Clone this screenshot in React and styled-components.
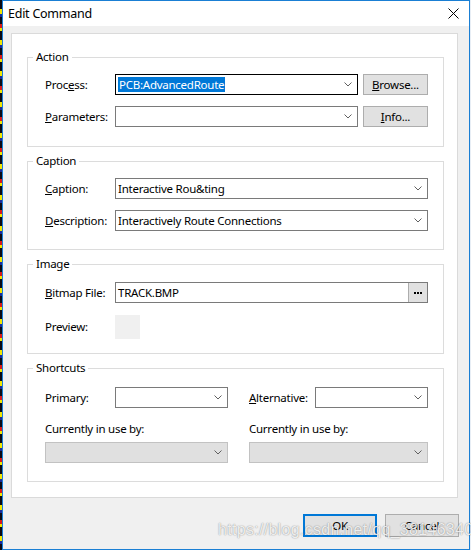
import React from 'react';
import styled, { createGlobalStyle } from 'styled-components';

const GlobalStyle = createGlobalStyle`
  html, body {
    margin: 0;
    padding: 0;
  }
  body {
    width: 471px;
    height: 550px;
    overflow: hidden;
    font-family: "Segoe UI", "Noto Sans", sans-serif;
    font-size: 11.5px;
    letter-spacing: -0.25px;
    color: #000;
  }
  * { box-sizing: border-box; }
`;

const Desktop = styled.div`
  position: relative;
  display: flex;
  width: 471px;
  height: 550px;
  background: #e8eef5;
`;

const Strip = styled.div`
  width: 2px;
  flex: none;
  background: repeating-linear-gradient(
    180deg,
    #0a0a14 0 9px,
    #f2e600 9px 14px,
    #1c2a9a 14px 17px,
    #0a0a14 17px 24px,
    #d81818 24px 28px,
    #f2e600 28px 31px
  );
`;

const Window = styled.div`
  width: 468px;
  height: 550px;
  border: 1px solid #1a7fd4;
  background: #f0f0f0;
  display: flex;
  flex-direction: column;
`;

const TitleBar = styled.div`
  height: 25px;
  flex: none;
  background: #fff;
  display: flex;
  align-items: center;
  justify-content: space-between;
  padding: 0 10px 0 5px;
  font-size: 12.5px;
`;

const Body = styled.div`
  padding: 7px 11px 0 8px;
`;

const Panel = styled.div`
  height: 465px;
  background: #fff;
  border: 1px solid #dadada;
  padding: 23px 13px 0 15px;
  display: flex;
  flex-direction: column;
  gap: 14px;
`;

const Group = styled.div`
  position: relative;
  border: 1px solid #dcdcdc;
  padding: ${p => p.$pad};
  display: flex;
  flex-direction: column;
`;

const Legend = styled.span`
  position: absolute;
  top: -9px;
  left: 5px;
  line-height: 16px;
  padding: 0 3px;
  background: #fff;
`;

const Row = styled.div`
  display: flex;
  align-items: center;
  flex: none;
  height: ${p => p.$h || 21}px;
  margin-top: ${p => p.$gap || 0}px;
`;

const Label = styled.div`
  width: ${p => p.$w || 70}px;
  flex: none;
  white-space: nowrap;
  line-height: 16px;
`;

const Combo = styled.div`
  flex: ${p => (p.$grow ? '1' : 'none')};
  width: ${p => (p.$w ? `${p.$w}px` : 'auto')};
  height: 21px;
  border: 1px solid ${p => (p.$focus ? '#000' : p.$disabled ? '#c2c2c2' : '#7a7a7a')};
  background: ${p => (p.$disabled ? '#e0e0e0' : '#fff')};
  display: flex;
  align-items: center;
  padding: 0 5px 0 1px;
  white-space: nowrap;
`;

const ComboText = styled.span`
  flex: 1;
  line-height: 17px;
  padding-left: 1px;
`;

const Selected = styled.span`
  background: #0078d7;
  color: #fff;
  line-height: 17px;
  padding: 0 1px;
`;

const Button = styled.button`
  flex: none;
  width: ${p => p.$w}px;
  height: ${p => p.$h || 21}px;
  margin-left: ${p => p.$ml || 0}px;
  margin-top: ${p => p.$mt || 0}px;
  border: ${p => (p.$default ? '2px solid #0078d7' : '1px solid #adadad')};
  background: #e1e1e1;
  font: inherit;
  letter-spacing: inherit;
  color: #000;
  padding: 0;
  display: flex;
  align-items: center;
  justify-content: center;
`;

const FileField = styled.div`
  flex: 1;
  height: 21px;
  border: 1px solid #7a7a7a;
  display: flex;
  align-items: stretch;
`;

const FileText = styled.span`
  flex: 1;
  padding-left: 2px;
  line-height: 19px;
`;

const DotsButton = styled.div`
  width: 19px;
  background: #e1e1e1;
  border-left: 1px solid #adadad;
  display: flex;
  align-items: center;
  justify-content: center;
  gap: 1px;
`;

const Dot = styled.i`
  width: 2px;
  height: 2px;
  background: #000;
`;

const PreviewBox = styled.div`
  width: 25px;
  height: 24px;
  background: #f0f0f0;
`;

const ShortcutGrid = styled.div`
  display: grid;
  grid-template-columns: 183px 179px;
  column-gap: 21px;
`;

const Cell = styled.div`
  display: flex;
  flex-direction: column;
`;

const UseLabel = styled.div`
  line-height: 14px;
  margin: 14px 0 6px;
  white-space: nowrap;
`;

const Footer = styled.div`
  display: flex;
  justify-content: flex-end;
  gap: 8px;
  padding: 16px 10px 0 0;
`;

const Watermark = styled.div`
  position: absolute;
  z-index: 2;
  left: 218px;
  top: 521px;
  font-family: "Liberation Sans", Arial, sans-serif;
  font-size: 16px;
  letter-spacing: 0.3px;
  color: rgba(255, 255, 255, 0.85);
  text-shadow: 0 0 1px rgba(0, 0, 0, 0.35), 0 0 2px rgba(0, 0, 0, 0.2);
  white-space: nowrap;
  pointer-events: none;
`;

const Chevron = () => (
  <svg width="8" height="5" viewBox="0 0 8 5" style={{ flex: 'none' }}>
    <path d="M0.5 0.5 L4 4 L7.5 0.5" fill="none" stroke="#606060" strokeWidth="1" />
  </svg>
);

const CloseIcon = () => (
  <svg width="11" height="11" viewBox="0 0 11 11">
    <path d="M0.5 0.5 L10.5 10.5 M10.5 0.5 L0.5 10.5" stroke="#000" strokeWidth="1" />
  </svg>
);

const Key = ({ children }) => <u>{children}</u>;

export default function App() {
  return (
    <>
      <GlobalStyle />
      <Desktop>
        <Strip />
        <Window>
          <TitleBar>
            <span>Edit Command</span>
            <CloseIcon />
          </TitleBar>
          <Body>
            <Panel>
              <Group $pad="16px 15px 19px 17px">
                <Legend>Action</Legend>
                <Row>
                  <Label>Proc<Key>e</Key>ss:</Label>
                  <Combo $grow $focus>
                    <ComboText><Selected>PCB:AdvancedRoute</Selected></ComboText>
                    <Chevron />
                  </Combo>
                  <Button $w={65} $ml={5} $mt={-1}><Key>B</Key>rowse...</Button>
                </Row>
                <Row $gap={11}>
                  <Label><Key>P</Key>arameters:</Label>
                  <Combo $grow>
                    <ComboText />
                    <Chevron />
                  </Combo>
                  <Button $w={65} $ml={5} $mt={-1}><Key>I</Key>nfo...</Button>
                </Row>
              </Group>

              <Group $pad="16px 15px 18px 17px">
                <Legend>Caption</Legend>
                <Row>
                  <Label><Key>C</Key>aption:</Label>
                  <Combo $grow>
                    <ComboText>Interactive Rou&amp;ting</ComboText>
                    <Chevron />
                  </Combo>
                </Row>
                <Row $gap={11}>
                  <Label><Key>D</Key>escription:</Label>
                  <Combo $grow>
                    <ComboText>Interactively Route Connections</ComboText>
                    <Chevron />
                  </Combo>
                </Row>
              </Group>

              <Group $pad="17px 15px 14px 17px">
                <Legend>Image</Legend>
                <Row>
                  <Label><Key>B</Key>itmap File:</Label>
                  <FileField>
                    <FileText>TRACK.BMP</FileText>
                    <DotsButton><Dot /><Dot /><Dot /></DotsButton>
                  </FileField>
                </Row>
                <Row $gap={12} $h={24}>
                  <Label>Preview:</Label>
                  <PreviewBox />
                </Row>
              </Group>

              <Group $pad="18px 15px 18px 17px">
                <Legend>Shortcuts</Legend>
                <ShortcutGrid>
                  <Cell>
                    <Row>
                      <Label>Primary:</Label>
                      <Combo $w={113}><ComboText /><Chevron /></Combo>
                    </Row>
                    <UseLabel>Currently in use by:</UseLabel>
                    <Combo $disabled><ComboText /><Chevron /></Combo>
                  </Cell>
                  <Cell>
                    <Row>
                      <Label $w={66}><Key>A</Key>lternative:</Label>
                      <Combo $w={113}><ComboText /><Chevron /></Combo>
                    </Row>
                    <UseLabel>Currently in use by:</UseLabel>
                    <Combo $disabled><ComboText /><Chevron /></Combo>
                  </Cell>
                </ShortcutGrid>
              </Group>
            </Panel>
          </Body>
          <Footer>
            <Button $w={74} $h={23} $default>OK</Button>
            <Button $w={74} $h={23}>Cancel</Button>
          </Footer>
        </Window>
        <Watermark>https://blog.csdn.net/qq_38146340</Watermark>
      </Desktop>
    </>
  );
}
